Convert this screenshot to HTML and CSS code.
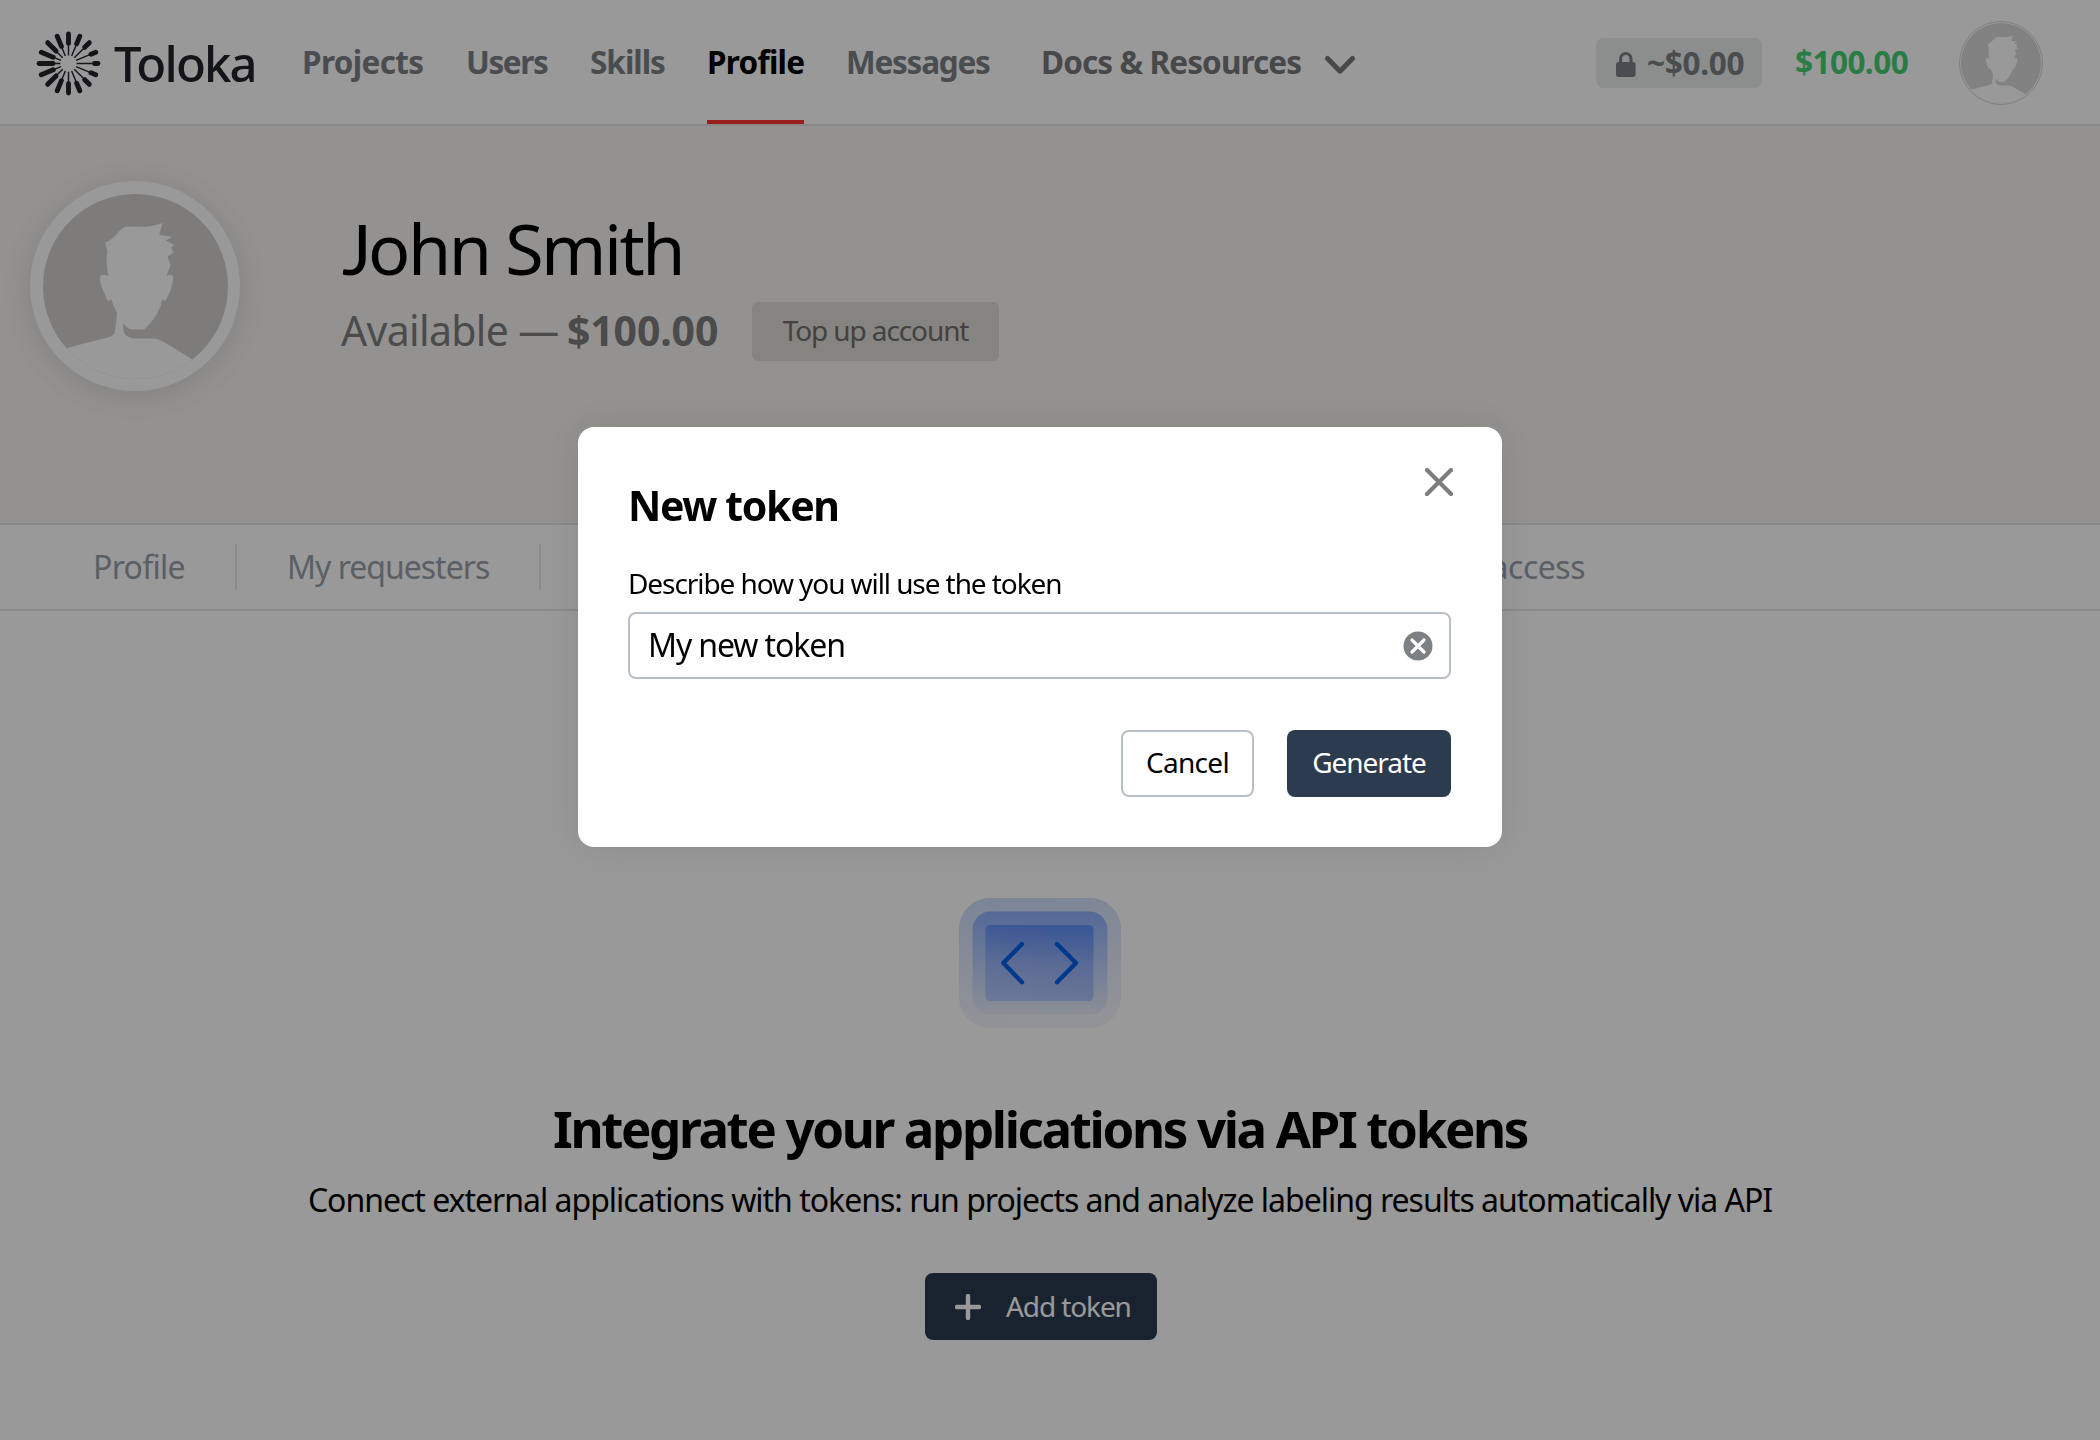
FILE: index.html
```
<!DOCTYPE html>
<html lang="en">
<head>
<meta charset="utf-8">
<title>Toloka – Profile</title>
<link rel="stylesheet" href="styles.css">
</head>
<body>
<svg class="defs" aria-hidden="true">
  <defs>
    <symbol id="person" viewBox="129 129 554 554">
      <path d="M380 226L440 227Q470 224 487 216L477 252L516 257L497 268L521 281L512 291L520 305L502 316L511 342L499 374Q518 366 519 378Q518 410 495 450L486 444Q480 490 432 535L395 535Q380 532 370 515Q362 556 400 562L465 562Q478 562 580 627L700 705L110 705L129 610L200 590L325 558Q345 555 345 535L351 485Q337 462 335 444L324 450Q300 405 299 378Q303 367 325 375Q315 330 322 300L315 275Q335 268 355 243Q368 228 380 226Z"/>
    </symbol>
  </defs>
</svg>
<header class="header">
  <a class="logo">
    <svg class="logo-mark" viewBox="-32 -32 64 64">
      <g class="rays">
        <path d="M8 0H28M-8 0H-28M0 8V28M0 -8V-28M7.4 3.1L25.9 10.7M7.4 -3.1L25.9 -10.7M-7.4 3.1L-25.9 10.7M-7.4 -3.1L-25.9 -10.7M5.7 5.7L19.8 19.8M5.7 -5.7L19.8 -19.8M-5.7 5.7L-19.8 19.8M-5.7 -5.7L-19.8 -19.8M3.1 7.4L10.7 25.9M3.1 -7.4L10.7 -25.9M-3.1 7.4L-10.7 25.9M-3.1 -7.4L-10.7 -25.9"/>
      </g>
      <g class="tips">
        <path d="M25.5 0H29"/>
        <path d="M24 0H29" transform="rotate(22.5)"/>
        <path d="M24 0H29" transform="rotate(-22.5)"/>
        <path d="M22.5 0H29" transform="rotate(45)"/>
        <path d="M22.5 0H29" transform="rotate(-45)"/>
        <path d="M21 0H29" transform="rotate(67.5)"/>
        <path d="M21 0H29" transform="rotate(-67.5)"/>
        <path d="M19.8 0H29" transform="rotate(90)"/>
        <path d="M19.8 0H29" transform="rotate(-90)"/>
        <path d="M18.3 0H29" transform="rotate(112.5)"/>
        <path d="M18.3 0H29" transform="rotate(-112.5)"/>
        <path d="M17.3 0H29" transform="rotate(135)"/>
        <path d="M17.3 0H29" transform="rotate(-135)"/>
        <path d="M16.3 0H29" transform="rotate(157.5)"/>
        <path d="M16.3 0H29" transform="rotate(-157.5)"/>
        <path d="M15.3 0H29" transform="rotate(180)"/>
      </g>
    </svg>
    <span class="logo-text">Toloka</span>
  </a>
  <nav class="nav">
    <a class="n1">Projects</a>
    <a class="n2">Users</a>
    <a class="n3">Skills</a>
    <a class="n4 active">Profile</a>
    <a class="n5">Messages</a>
  </nav>
  <a class="docs">Docs &amp; Resources
    <svg class="chevron" viewBox="0 0 32 20"><path d="M3.5 3.5L16 16.2L28.5 3.5"/></svg>
  </a>
  <div class="account">
    <span class="hold">
      <svg class="lock" viewBox="0 0 20 25"><path class="shackle" d="M4.6 12V6.8a5.2 5.2 0 0 1 10.4 0V12"/><rect x="0" y="10" width="19.6" height="15" rx="2.5"/></svg>
      ~$0.00
    </span>
    <span class="balance">$100.00</span>
    <span class="avatar-small"><svg><use href="#person"/></svg></span>
  </div>
</header>
<section class="hero">
  <div class="avatar-large"><svg><use href="#person"/></svg></div>
  <div class="hero-info">
    <h1 class="name"><span class="initial">J</span>ohn Smith</h1>
    <div class="funds">
      <span class="funds-label">Available —</span>
      <b class="funds-sum">$100.00</b>
      <button class="topup">Top up account</button>
    </div>
  </div>
</section>
<nav class="tabs">
  <a class="tab tab-profile">Profile</a>
  <a class="tab tab-requesters">My requesters</a>
  <a class="tab tab-access">API access</a>
</nav>
<main class="empty">
  <svg class="code-icon" viewBox="0 0 162 130">
    <defs>
      <linearGradient id="g1" x1="0" y1="0" x2="0.15" y2="1"><stop offset="0" stop-color="#cedefc"/><stop offset="1" stop-color="#f4f5fc"/></linearGradient>
      <linearGradient id="g2" x1="0" y1="0" x2="0" y2="1"><stop offset="0" stop-color="#8db0fc"/><stop offset="1" stop-color="#e8edfb"/></linearGradient>
      <linearGradient id="g3" x1="0.1" y1="0" x2="0" y2="1"><stop offset="0" stop-color="#6693fa"/><stop offset="0.5" stop-color="#9ab5f8"/><stop offset="1" stop-color="#b4c8fb"/></linearGradient>
    </defs>
    <rect x="0" y="0" width="162" height="130" rx="31" fill="url(#g1)"/>
    <rect x="13.5" y="13.5" width="135" height="103" rx="18" fill="url(#g2)"/>
    <rect x="26.5" y="27" width="108" height="76" rx="4.5" fill="url(#g3)"/>
    <path d="M63 46L44.3 65L63 84.2M98 46L117 65L98 84.2"/>
  </svg>
  <h2 class="empty-title">Integrate your applications via API tokens</h2>
  <p class="empty-text">Connect external applications with tokens: run projects and analyze labeling results automatically via API</p>
  <button class="add">
    <svg viewBox="0 0 26 26"><path d="M13 2V24M2 13H24"/></svg>
    Add token
  </button>
</main>
<div class="overlay">
  <div class="modal" role="dialog">
    <div class="modal-head">
      <h3 class="modal-title">New token</h3>
      <svg class="close" viewBox="0 0 28 28"><path d="M2 2L26 26M26 2L2 26"/></svg>
    </div>
    <label class="label">Describe how you will use the token</label>
    <div class="field">
      <span class="value">My new token</span>
      <svg class="clear" viewBox="0 0 30 30"><circle cx="15" cy="15" r="14.5"/><path d="M9 9L21 21M21 9L9 21"/></svg>
    </div>
    <div class="actions">
      <button class="cancel">Cancel</button>
      <button class="generate">Generate</button>
    </div>
  </div>
</div>
</body>
</html>
```
FILE: styles.css
```
* { box-sizing: border-box; }
body {
  margin: 0;
  height: 1440px;
  overflow: hidden;
  background: #fff;
  color: #000;
  font-family: "Noto Sans", "Open Sans", sans-serif;
  font-size: 32px;
}
h1, h2, h3, p { margin: 0; }
button { font: inherit; border: 0; padding: 0; }
svg { display: block; flex: none; }
.defs { display: none; }

.header {
  display: flex;
  height: 126px;
  padding-left: 36px;
  border-bottom: 2px solid #e4e4e4;
  font-size: 31.5px;
  font-weight: 700;
  line-height: 124px;
  white-space: nowrap;
  color: #7c8084;
}
.logo { display: flex; align-items: center; width: 266px; color: #20232b; }
.logo-mark { width: 65px; height: 65px; margin-top: 3px; }
.rays { stroke: #20232b; stroke-width: 1.4; }
.tips { stroke: #20232b; stroke-width: 4.8; stroke-linecap: round; }
.logo-text { margin-left: 13px; font-size: 49px; font-weight: 500; letter-spacing: -1.8px; line-height: 120px; margin-top: 1px; }
.nav { display: grid; grid-template-columns: 122px 82px 75px 97px 145px; column-gap: 42px; }
.nav a { height: 124px; }
.n1 { letter-spacing: -0.65px; }
.n2 { letter-spacing: -1.4px; }
.n3 { letter-spacing: -1px; }
.n4 { letter-spacing: -0.75px; }
.n5 { letter-spacing: -1.25px; }
.nav .active { color: #000; border-bottom: 4px solid #f33; }
.docs { display: flex; align-items: center; justify-content: space-between; width: 315px; margin-left: 50px; letter-spacing: -0.9px; color: #77787a; }
.chevron { width: 32px; height: 20px; margin-top: 6px; }
.chevron path { fill: none; stroke: #77787a; stroke-width: 5; stroke-linecap: round; stroke-linejoin: round; }
.account { display: flex; align-items: center; margin-left: auto; padding-right: 57px; }
.hold { display: flex; align-items: center; gap: 11px; width: 166px; height: 50px; margin-top: 1px; padding-left: 20px; border-radius: 8px; background: #e8edeb; letter-spacing: -0.3px; line-height: 46px; }
.lock { width: 20px; height: 25px; fill: #7c8084; margin-top: 3px; }
.lock .shackle { fill: none; stroke: #7c8084; stroke-width: 3; }
.balance { width: 164px; margin-left: 33px; color: #46cf73; letter-spacing: -0.55px; }
.avatar-small { width: 84px; height: 84px; margin-top: 2px; padding: 1px; border: 1.5px solid #d4d4d4; border-radius: 50%; }
.avatar-small svg { width: 100%; height: 100%; border-radius: 50%; background: #d9d9d9; fill: #fff; }

.hero { display: flex; height: 397px; padding: 55px 0 0 30px; background: #f7f4f0; }
.avatar-large { width: 210px; height: 210px; padding: 12.5px; border-radius: 50%; background: #fff; box-shadow: 0 4px 36px rgba(0, 0, 0, 0.12); }
.avatar-large svg { width: 185px; height: 185px; border-radius: 50%; background: #d1cfcb; fill: #fff; }
.hero-info { margin: 26px 0 0 101px; }
.name { font-size: 70px; font-weight: 400; letter-spacing: -2.5px; line-height: 82px; padding-left: 1px; }
.initial { font-family: Lato, sans-serif; line-height: 1; margin-right: -1px; }
.funds { display: flex; align-items: center; height: 59px; margin-top: 13px; font-size: 41px; line-height: 55px; color: #7d7d7d; white-space: nowrap; }
.funds-label { width: 226px; letter-spacing: -0.65px; margin-top: -3px; }
.funds-sum { width: 185px; letter-spacing: -0.15px; margin-top: -3px; }
.topup { width: 247px; height: 59px; padding-bottom: 2px; border-radius: 6px; background: #dfdcd8; color: #6e6e6c; font-size: 28px; letter-spacing: -1.1px; }

.tabs { display: flex; align-items: center; height: 88px; padding-left: 93px; border: solid #e4e4e4; border-width: 2px 0; color: #969fab; white-space: nowrap; }
.tab { height: 46px; line-height: 45px; }
.tab-profile { width: 144px; border-right: 2px solid #e8e8e8; letter-spacing: -0.7px; }
.tab-requesters { width: 304px; padding-left: 50px; border-right: 2.5px solid #e8e8e8; letter-spacing: -1px; }
.tab-access { width: 1044px; text-align: right; letter-spacing: -0.5px; }

.empty { display: flex; flex-direction: column; align-items: center; width: 2080px; padding-top: 287px; }
.code-icon { width: 162px; height: 130px; }
.code-icon path { fill: none; stroke: #005eea; stroke-width: 4.4; stroke-linecap: round; stroke-linejoin: round; }
.empty-title { margin-top: 70px; font-size: 51px; font-weight: 700; line-height: 60px; letter-spacing: -2.35px; white-space: nowrap; }
.empty-text { margin-top: 22px; line-height: 40px; letter-spacing: -1.01px; white-space: nowrap; }
.add { display: flex; align-items: center; gap: 25px; width: 232px; height: 67px; margin: 53px 0 0 2px; padding: 0 0 2px 30px; border-radius: 8px; background: #2b3b4f; color: #fff; font-size: 28px; letter-spacing: -1.1px; }
.add svg { width: 26px; height: 26px; margin-top: 3px; }
.add path { stroke: #fff; stroke-width: 4.4; stroke-linecap: round; }

.overlay { position: fixed; inset: 0; display: flex; justify-content: center; align-items: flex-start; padding: 427px 20px 0 0; background: rgba(0, 0, 0, 0.4); }
.modal { display: flex; flex-direction: column; width: 924px; height: 420px; padding: 40px 51px 50px 50px; border-radius: 16px; background: #fff; box-shadow: 0 0 40px rgba(0, 0, 0, 0.1); }
.modal-head { display: flex; justify-content: space-between; }
.modal-title { margin-top: 13px; font-size: 41px; font-weight: 700; line-height: 50px; letter-spacing: -1.35px; }
.close { width: 28px; height: 28px; margin: 1px -2px 0 0; }
.close path { stroke: #7b7d80; stroke-width: 4.2; stroke-linecap: round; }
.label { margin-top: 35px; font-size: 28px; line-height: 36px; letter-spacing: -1.08px; }
.field { display: flex; align-items: center; justify-content: space-between; height: 67px; margin-top: 11px; padding: 0 16px 0 18px; border: 2px solid #b9bfc6; border-radius: 8px; }
.value { letter-spacing: -1.1px; line-height: 60px; margin-top: -2px; }
.clear { width: 30px; height: 30px; fill: #7d8083; }
.clear path { stroke: #fff; stroke-width: 3.2; stroke-linecap: round; }
.actions { display: flex; justify-content: flex-end; gap: 33px; margin-top: 51px; }
.actions button { height: 67px; padding-bottom: 3px; border-radius: 8px; font-size: 28px; }
.cancel { width: 133px; border: 2px solid #b9bfc6; background: #fff; letter-spacing: -0.7px; }
.generate { width: 164px; background: #2c3b4e; color: #fff; letter-spacing: -1.05px; }
```
